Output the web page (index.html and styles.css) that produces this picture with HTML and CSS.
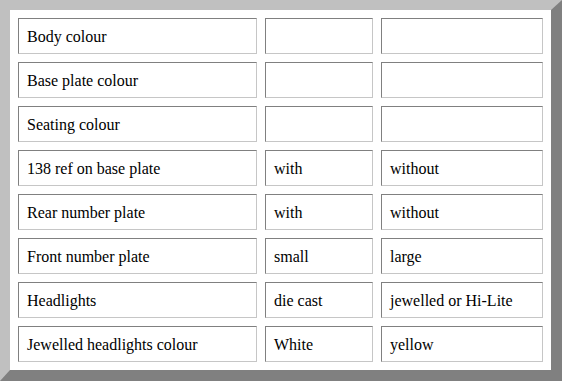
FILE: index.html
```html
<!DOCTYPE html>
<html>
<head>
<meta charset="utf-8">
<link rel="stylesheet" href="styles.css">
</head>
<body>
<table class="spec">
<colgroup><col class="c1"><col class="c2"><col class="c3"></colgroup>
<tr><td>Body colour</td><td></td><td></td></tr>
<tr><td>Base plate colour</td><td></td><td></td></tr>
<tr><td>Seating colour</td><td></td><td></td></tr>
<tr><td>138 ref on base plate</td><td>with</td><td>without</td></tr>
<tr><td>Rear number plate</td><td>with</td><td>without</td></tr>
<tr><td>Front number plate</td><td>small</td><td>large</td></tr>
<tr><td>Headlights</td><td>die cast</td><td>jewelled or Hi-Lite</td></tr>
<tr><td>Jewelled headlights colour</td><td>White</td><td>yellow</td></tr>
</table>
</body>
</html>
```

FILE: styles.css
```css
html, body {
  margin: 0;
  padding: 0;
  background: #ffffff;
}
.spec {
  border-collapse: separate;
  border-spacing: 8px;
  border-style: solid;
  border-width: 10px 11px 11px 10px;
  border-color: #c0c0c0 #808080 #808080 #c0c0c0;
  background: #ffffff;
  table-layout: fixed;
  width: 562px;
  font-family: "Liberation Serif", "Times New Roman", serif;
  font-size: 16px;
  color: #000000;
}
.c1 { width: 239px; }
.c2 { width: 108px; }
.c3 { width: 162px; }
.spec td {
  box-sizing: border-box;
  height: 36px;
  padding: 2px 4px 0 8px;
  border-style: solid;
  border-width: 1px;
  border-color: #808080 #c6c6c6 #c6c6c6 #808080;
  vertical-align: middle;
  white-space: nowrap;
}
```
